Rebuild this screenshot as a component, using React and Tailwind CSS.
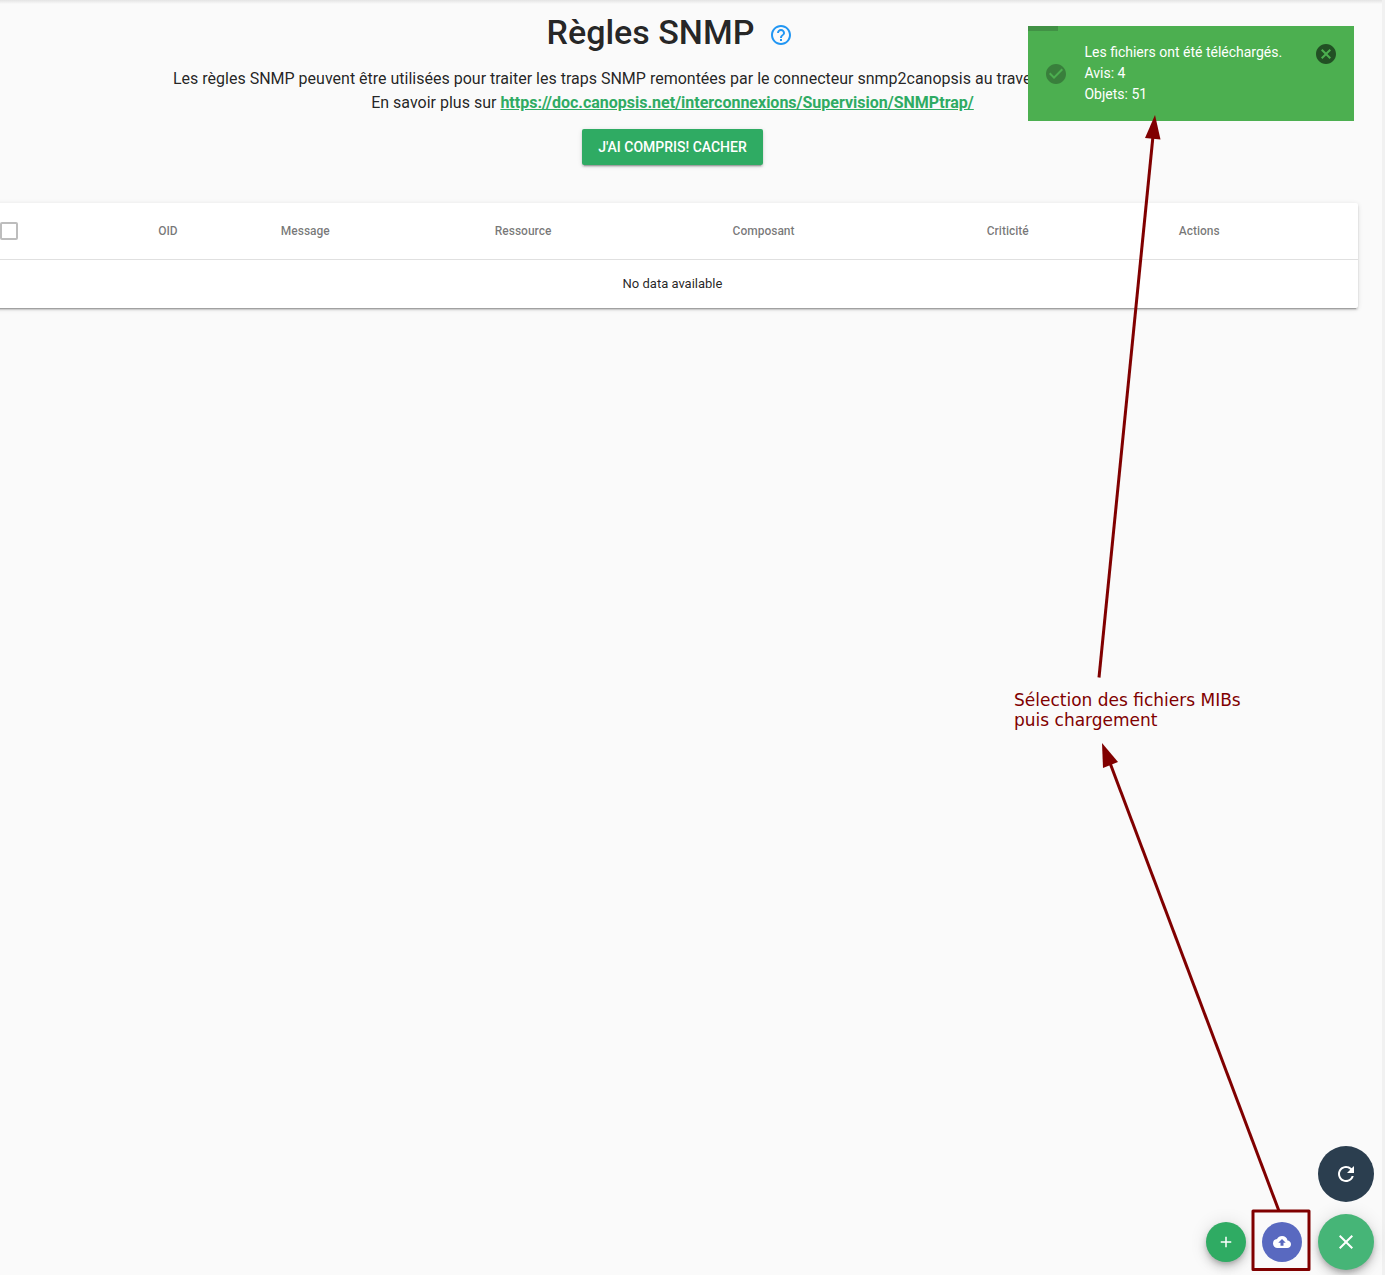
import React from "react";
import {
  MdAdd,
  MdCancel,
  MdCheckCircle,
  MdClose,
  MdCloudUpload,
  MdHelpOutline,
  MdRefresh,
} from "react-icons/md";

const fabShadow =
  "shadow-[0_3px_5px_-1px_rgba(0,0,0,0.2),0_6px_10px_0_rgba(0,0,0,0.14),0_1px_18px_0_rgba(0,0,0,0.12)]";

function Header() {
  return (
    <header className="flex w-[1345px] flex-col items-center">
      <div className="flex h-[67px] items-center">
        <h1 className="-mt-[3px] text-[34px] leading-10 font-medium whitespace-nowrap">
          Règles SNMP
        </h1>
        <MdHelpOutline className="mt-[3px] mr-[5.5px] ml-[14.5px] size-6 text-[#2196f3]" />
      </div>
      <p className="w-[999px] text-base leading-6 whitespace-nowrap">
        Les règles SNMP peuvent être utilisées pour traiter les traps SNMP remontées par le
        connecteur snmp2canopsis au travers
      </p>
      <p className="text-base leading-6">
        En savoir plus sur{" "}
        <a href="#doc" className="font-bold text-[#2fab63] underline">
          https://doc.canopsis.net/interconnexions/Supervision/SNMPtrap/
        </a>
      </p>
      <button className="mt-3.5 h-9 w-[181px] rounded-xs bg-[#2fab63] text-sm font-medium whitespace-nowrap text-white shadow-[0_3px_1px_-2px_rgba(0,0,0,0.2),0_2px_2px_0_rgba(0,0,0,0.14),0_1px_5px_0_rgba(0,0,0,0.12)]">
        J'AI COMPRIS! CACHER
      </button>
    </header>
  );
}

function RulesTable() {
  return (
    <section className="mt-[38px] -ml-3 w-[1370px] rounded-xs bg-white pl-3 shadow-[0_3px_1px_-2px_rgba(0,0,0,0.2),0_2px_2px_0_rgba(0,0,0,0.14),0_1px_5px_0_rgba(0,0,0,0.12)]">
      <div className="grid h-[57px] grid-cols-[158.2px_122.6px_214px_237.8px_254.2px_192px_1fr] items-center border-b border-black/12 text-xs font-medium text-black/54">
        <span className="size-[18px] rounded-xs border-2 border-[#bdbdbd]" />
        <span>OID</span>
        <span>Message</span>
        <span>Ressource</span>
        <span>Composant</span>
        <span>Criticité</span>
        <span>Actions</span>
      </div>
      <div className="flex h-12 w-[1345px] items-center justify-center text-[13px]">
        No data available
      </div>
    </section>
  );
}

function Toast() {
  return (
    <aside className="absolute top-[26px] left-[1028px] flex h-[95px] w-[326px] bg-[#4caf50] text-white">
      <div className="absolute top-0 left-0 h-[5px] w-[30px] bg-[#419145]" />
      <MdCheckCircle className="ml-[16.3px] size-6 self-center text-[#397f3c]" />
      <div className="mt-4 ml-[16.2px] flex-1 text-sm leading-[21px] whitespace-nowrap">
        <p>Les fichiers ont été téléchargés.</p>
        <p>Avis: 4</p>
        <p>Objets: 51</p>
      </div>
      <MdCancel className="mt-4 mr-4 size-6 text-[#225024]" />
    </aside>
  );
}

function Annotations() {
  return (
    <>
      <svg
        className="pointer-events-none absolute inset-0"
        width="1385"
        height="1275"
        fill="none"
        stroke="#800000"
        strokeWidth="3"
      >
        <path d="M1099 677.5 1153 136" />
        <path d="M1155 115 1160.5 139.5 1145 138Z" fill="#800000" stroke="none" />
        <path d="M1279 1211 1110 763" />
        <path d="M1102 743 1118 762 1103 768Z" fill="#800000" stroke="none" />
        <rect x="1253" y="1211" width="56" height="58.5" strokeLinejoin="round" />
      </svg>
      <p className="absolute top-[690px] left-[1014px] font-['DejaVu_Sans',sans-serif] text-[17px] leading-5 whitespace-nowrap text-[#800000]">
        Sélection des fichiers MIBs
        <br />
        puis chargement
      </p>
    </>
  );
}

function ActionButtons() {
  return (
    <div className="absolute right-[11px] bottom-[5px] flex flex-col items-end gap-3 text-white">
      <button className="flex size-14 items-center justify-center rounded-full bg-[#2b3e4f]">
        <MdRefresh className="size-6" />
      </button>
      <div className="flex items-center gap-4">
        <button className={`flex size-10 items-center justify-center rounded-full bg-[#2fab63] ${fabShadow}`}>
          <MdAdd className="size-[18px]" />
        </button>
        <button className="flex size-10 items-center justify-center rounded-full bg-[#5969c0]">
          <MdCloudUpload className="size-[18px]" />
        </button>
        <button className={`flex size-14 items-center justify-center rounded-full bg-[#46b577] ${fabShadow}`}>
          <MdClose className="size-6" />
        </button>
      </div>
    </div>
  );
}

export default function App() {
  return (
    <div className="relative h-[1275px] w-[1385px] overflow-hidden bg-[#fafafa] font-[Roboto,sans-serif] text-black/87">
      <div className="absolute top-0 right-0 h-full w-[3px] bg-[#f1f1f1]" />
      <div className="absolute top-0 left-0 h-1 w-[1382px] bg-linear-to-b from-[#e4e4e4] to-[#fafafa]" />
      <Header />
      <RulesTable />
      <ActionButtons />
      <Toast />
      <Annotations />
    </div>
  );
}
